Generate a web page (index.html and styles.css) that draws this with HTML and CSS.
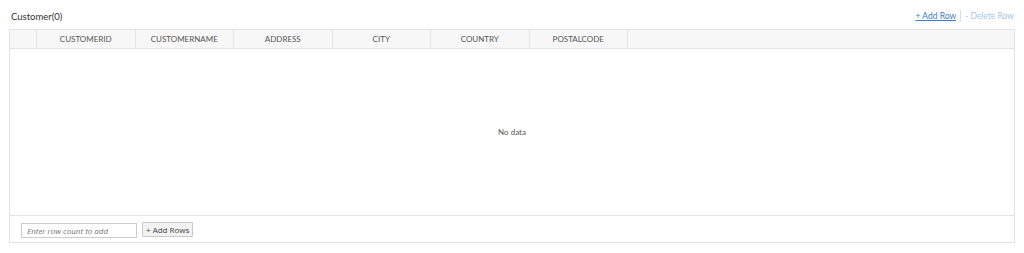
FILE: index.html
```html
<!DOCTYPE html>
<html lang="en">
<head>
  <meta charset="UTF-8" />
  <title>Customer</title>
  <link rel="stylesheet" href="styles.css">
</head>
<body>
  <div class="panel">
    <div class="toolbar">
      <span class="title">Customer(0)</span>
      <div class="actions">
        <a href="#" class="link">+ Add Row</a>
        <span class="sep"></span>
        <span class="link disabled">- Delete Row</span>
      </div>
    </div>

    <div class="grid">
      <div class="head">
        <div class="cell sel"></div>
        <div class="cell">CUSTOMERID</div>
        <div class="cell">CUSTOMERNAME</div>
        <div class="cell">ADDRESS</div>
        <div class="cell">CITY</div>
        <div class="cell">COUNTRY</div>
        <div class="cell">POSTALCODE</div>
        <div class="cell fill"></div>
      </div>
      <div class="body">No data</div>
      <div class="foot">
        <input type="text" class="count" placeholder="Enter row count to add" />
        <button class="btn">+ Add Rows</button>
      </div>
    </div>
  </div>
</body>
</html>
```

FILE: styles.css
```css
body {
  margin: 0;
  font-family: Lato, "Open Sans", sans-serif;
  color: #333;
  background: #fff;
}
.panel {
  padding: 8px 9px 0 9px;
}
.toolbar {
  display: flex;
  justify-content: space-between;
  align-items: center;
  height: 16px;
  padding: 0 1px 5px 2px;
}
.title {
  font-size: 9.5px;
}
.actions {
  display: flex;
  align-items: center;
  gap: 4px;
  font-size: 8.5px;
}
.link {
  color: #3b7cc4;
  text-decoration: underline;
}
.link.disabled {
  color: #a9c7e6;
  text-decoration: none;
}
.sep {
  width: 1px;
  height: 12px;
  background: #ddd;
}
.grid {
  border: 1px solid #e4e4e4;
}
.head {
  display: flex;
  height: 18px;
  background: #f7f7f7;
  border-bottom: 1px solid #e4e4e4;
}
.cell {
  width: 97.5px;
  flex-shrink: 0;
  border-right: 1px solid #e4e4e4;
  display: flex;
  align-items: center;
  justify-content: center;
  font-size: 8px;
  color: #555;
}
.cell.sel {
  width: 26px;
}
.cell.fill {
  flex: 1;
  border-right: none;
}
.body {
  height: 166px;
  display: flex;
  align-items: center;
  justify-content: center;
  font-size: 8px;
  color: #555;
  border-bottom: 1px solid #e4e4e4;
}
.foot {
  display: flex;
  align-items: center;
  gap: 5px;
  height: 26px;
  padding-left: 11px;
}
.count {
  width: 116px;
  height: 15px;
  box-sizing: border-box;
  border: 1px solid #ccc;
  padding: 0 5px;
  font-size: 8px;
  font-family: "Open Sans", sans-serif;
  margin-top: 2px;
}
.count::placeholder {
  color: #777;
  font-style: italic;
}
.btn {
  height: 15px;
  padding: 0 3px;
  border: 1px solid #c8c8c8;
  background: #f2f2f2;
  font-family: "Open Sans", sans-serif;
  font-size: 8px;
  color: #444;
  border-radius: 1px;
}
```
